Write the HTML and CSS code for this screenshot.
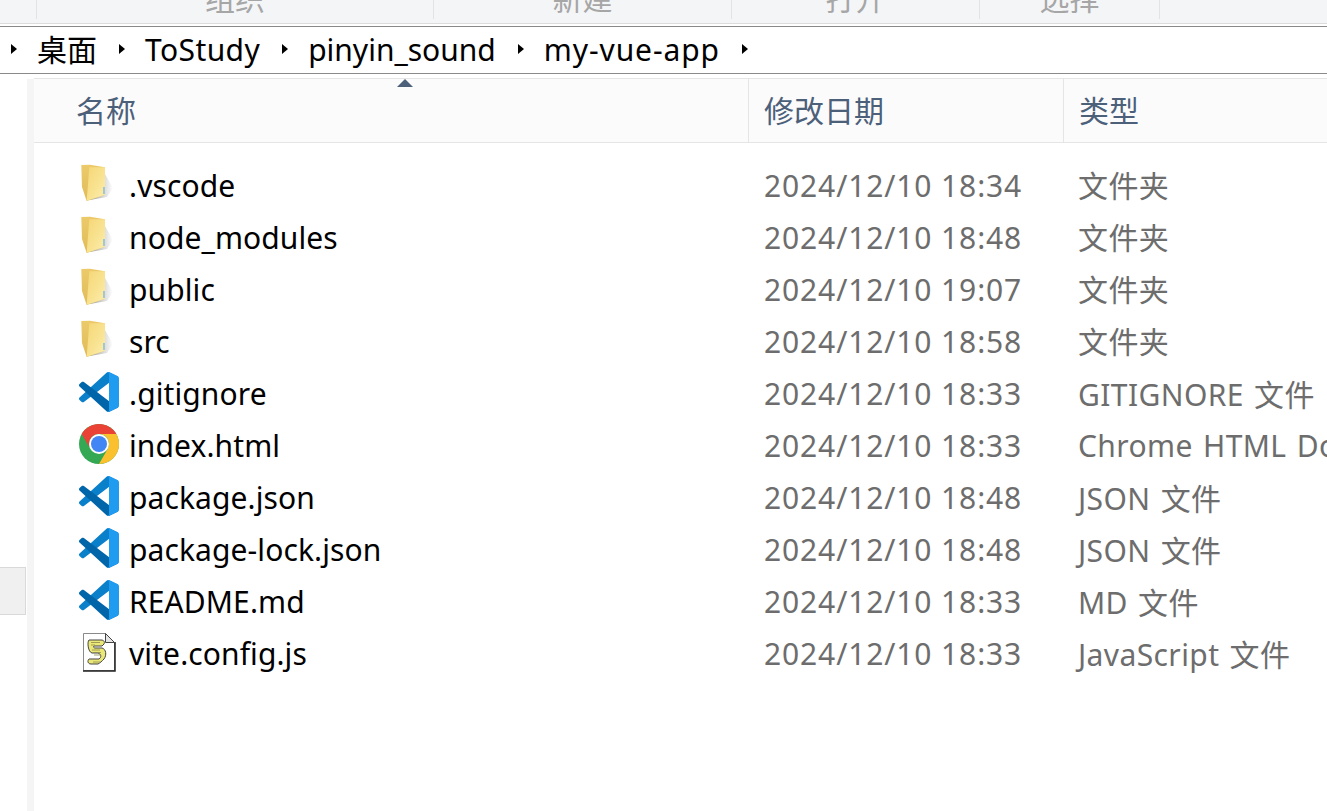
FILE: index.html
```html
<!DOCTYPE html>
<html lang="zh-CN">
<head>
  <meta charset="UTF-8">
  <title>my-vue-app</title>
  <link rel="stylesheet" href="styles.css">
</head>
<body>
<svg class="defs" width="0" height="0">
  <defs>
    <linearGradient id="fold-back" x1="0" y1="0" x2="0" y2="1">
      <stop offset="0" stop-color="#ecca6a"/>
      <stop offset="1" stop-color="#e0bc58"/>
    </linearGradient>
    <linearGradient id="fold-front" x1="0" y1="0" x2="1" y2="1">
      <stop offset="0" stop-color="#f5d676"/>
      <stop offset=".6" stop-color="#f9e494"/>
      <stop offset="1" stop-color="#fcefb4"/>
    </linearGradient>
    <linearGradient id="fold-shadow" x1="0" y1="0" x2="1" y2="0">
      <stop offset="0" stop-color="#909090"/>
      <stop offset="1" stop-color="#ffffff"/>
    </linearGradient>
    <symbol id="folder" viewBox="0 0 40 40">
      <path d="M26 10l8 14-6 9-17 3z" fill="url(#fold-shadow)" opacity=".85"/>
      <path d="M2.300 1l8.700-.3 15 2.600v27.400L7.700 37 3 23z" fill="url(#fold-back)"/>
      <path d="M10.300 3.300H26v27.400L7.700 36.700z" fill="url(#fold-front)"/>
      <path d="M25 23v7" stroke="#6cb0e4" stroke-width="1.200"/>
    </symbol>
    <symbol id="vscode" viewBox="0 0 100 100">
      <path d="M96.46 10.8L75.86.88C73.47-.27 70.62.21 68.75 2.08L1.3 63.58c-1.81 1.66-1.81 4.51 0 6.16l5.51 5.01c1.49 1.35 3.72 1.45 5.32.24L93.36 13.37C96.09 11.3 100 13.25 100 16.67v-.24c0-2.4-1.38-4.59-3.54-5.63z" fill="#0a7fca"/>
      <path d="M96.46 89.2L75.86 99.12c-2.39 1.15-5.24.67-7.11-1.2L1.3 36.42c-1.81-1.66-1.81-4.51 0-6.16l5.51-5.01c1.49-1.35 3.72-1.45 5.32-.24l81.23 61.62c2.73 2.07 6.64.12 6.64-3.3v.24c0 2.4-1.38 4.59-3.54 5.63z" fill="#0065a9"/>
      <path d="M75.86 99.13c-2.39 1.15-5.24.66-7.11-1.21 2.31 2.31 6.25.67 6.25-2.59V4.67c0-3.26-3.94-4.89-6.25-2.59C70.62.21 73.47-.27 75.86.87l20.6 9.91c2.16 1.04 3.54 3.23 3.54 5.63v67.18c0 2.4-1.38 4.59-3.54 5.63z" fill="#1f9cf0"/>
    </symbol>
    <symbol id="chrome" viewBox="0 0 40 40">
      <circle cx="20" cy="20" r="20" fill="#34a853"/>
      <path d="M20 10H37.32A20 20 0 0 0 2.68 10L11.34 25A10 10 0 0 1 20 10z" fill="#ea4335"/>
      <path d="M37.32 10H20A10 10 0 0 1 28.66 25L20 40A20 20 0 0 0 37.32 10z" fill="#fbc02d"/>
      <circle cx="20" cy="20" r="10" fill="#fff"/>
      <circle cx="20" cy="20" r="8" fill="#4285f4"/>
    </symbol>
    <symbol id="script" viewBox="0 0 40 40">
      <path d="M4.500 1.500h22l9 9v28h-31z" fill="#fff" stroke="#8a8a8a"/>
      <path d="M36 10v29H4" fill="none" stroke="#222" stroke-width="1.500"/>
      <path d="M26.500 1.500v9h9z" fill="#e4e4e4" stroke="#444"/>
      <path d="M10 8h12c3 0 4 2 3 4l-2 2h-8c-1 1 0 2 1 2h7c4 1 5 7 2 11-2 2-4 4-6 5H12c-3 0-4-3-2-5h10c3-2 2-5-1-6h-6C9 20 8 10 10 8z" fill="#ece878" stroke="#444" stroke-width="1"/>
      <path d="M12 10.500h9M12 13h4M13 18h8M14 20.500h8M15 23h7M14 30h7" stroke="#8a8a50" stroke-width=".8"/>
    </symbol>
  </defs>
</svg>

<div class="ribbon">
  <div class="ribbon-group g1">组织</div>
  <div class="ribbon-group g2">新建</div>
  <div class="ribbon-group g3">打开</div>
  <div class="ribbon-group g4">选择</div>
</div>

<nav class="crumbs">
  <i class="arrow"></i><span class="cjk">桌面</span>
  <i class="arrow"></i><span class="wide-a">ToStudy</span>
  <i class="arrow"></i><span>pinyin_sound</span>
  <i class="arrow"></i><span class="wide-b">my-vue-app</span>
  <i class="arrow"></i>
</nav>

<div class="explorer">
  <aside class="nav-pane"><div class="nav-selected"></div></aside>
  <div class="nav-gutter"></div>
  <main class="files">
    <div class="head">
      <div class="col-name">名称<i class="sort"></i></div>
      <div class="col-date">修改日期</div>
      <div class="col-type">类型</div>
    </div>
    <div class="rows">
      <div class="row"><div class="col-name"><svg class="icon"><use href="#folder"/></svg>.vscode</div><div class="col-date">2024/12/10 18:34</div><div class="col-type folder-type">文件夹</div></div>
      <div class="row"><div class="col-name"><svg class="icon"><use href="#folder"/></svg>node_modules</div><div class="col-date">2024/12/10 18:48</div><div class="col-type folder-type">文件夹</div></div>
      <div class="row"><div class="col-name"><svg class="icon"><use href="#folder"/></svg>public</div><div class="col-date">2024/12/10 19:07</div><div class="col-type folder-type">文件夹</div></div>
      <div class="row"><div class="col-name"><svg class="icon"><use href="#folder"/></svg>src</div><div class="col-date">2024/12/10 18:58</div><div class="col-type folder-type">文件夹</div></div>
      <div class="row"><div class="col-name"><svg class="icon"><use href="#vscode"/></svg>.gitignore</div><div class="col-date">2024/12/10 18:33</div><div class="col-type">GITIGNORE 文件</div></div>
      <div class="row"><div class="col-name"><svg class="icon"><use href="#chrome"/></svg>index.html</div><div class="col-date">2024/12/10 18:33</div><div class="col-type">Chrome HTML Document</div></div>
      <div class="row"><div class="col-name"><svg class="icon"><use href="#vscode"/></svg>package.json</div><div class="col-date">2024/12/10 18:48</div><div class="col-type">JSON 文件</div></div>
      <div class="row"><div class="col-name"><svg class="icon"><use href="#vscode"/></svg>package-lock.json</div><div class="col-date">2024/12/10 18:48</div><div class="col-type">JSON 文件</div></div>
      <div class="row"><div class="col-name"><svg class="icon"><use href="#vscode"/></svg>README.md</div><div class="col-date">2024/12/10 18:33</div><div class="col-type">MD 文件</div></div>
      <div class="row"><div class="col-name"><svg class="icon"><use href="#script"/></svg>vite.config.js</div><div class="col-date">2024/12/10 18:33</div><div class="col-type">JavaScript 文件</div></div>
    </div>
  </main>
</div>
</body>
</html>
```

FILE: styles.css
```css
html, body {
  margin: 0;
  height: 100%;
  overflow: hidden;
}
body {
  width: 1327px;
  height: 811px;
  background: #fff;
  font-family: "Noto Sans", "Noto Sans CJK SC", sans-serif;
  font-size: 30px;
  color: #000;
}
.defs {
  display: block;
  height: 0;
}

/* ribbon, only the cut off bottom of it shows */
.ribbon {
  display: flex;
  height: 23px;
  padding-left: 36px;
  background: #f4f5f7;
  border-bottom: 1px solid #dcdcdc;
  overflow: hidden;
}
.ribbon-group {
  height: 19px;
  padding-bottom: 5px;
  display: flex;
  align-items: flex-end;
  justify-content: center;
  border-left: 1px solid #e2e3e5;
  font-size: 30px;
  line-height: 30px;
  color: #a6a6a6;
  box-sizing: border-box;
}
.g1 { width: 397px; }
.g2 { width: 298px; }
.g3 { width: 248px; }
.g4 { width: 181px; border-right: 1px solid #e2e3e5; }

.crumbs {
  display: flex;
  align-items: center;
  margin-top: 2px;
  padding-left: 11px;
  padding-bottom: 2px;
  height: 44px;
  border-top: 1px solid #8a8a8a;
  border-bottom: 1px solid #8a8a8a;
}
.crumbs .arrow {
  width: 0;
  height: 0;
  border-left: 6px solid #000;
  border-top: 5px solid transparent;
  border-bottom: 5px solid transparent;
  margin-right: 20px;
}
.crumbs span {
  margin-right: 22px;
  white-space: nowrap;
}
.crumbs .cjk { padding-bottom: 2px; }
.wide-a { letter-spacing: .4px; }
.wide-b { letter-spacing: .9px; }

.explorer {
  display: flex;
  height: 733px;
  margin-top: 5px;
}
.nav-pane {
  width: 27px;
  padding-top: 488px;
  box-sizing: border-box;
}
.nav-selected {
  height: 48px;
  width: 26px;
  background: #f0f0f0;
  border: solid #d9d9d9;
  border-width: 1px 1px 1px 0;
  box-sizing: border-box;
}
.nav-gutter {
  width: 7px;
  background: #f5f5f5;
}
.files {
  flex: 1;
  min-width: 0;
}
.head {
  display: flex;
  height: 63px;
  background: #fbfbfc;
  border-top: 1px solid #e5e5e5;
  border-bottom: 1px solid #e5e5e5;
  margin-top: -1px;
  color: #4c607a;
}
.head .col-name {
  position: relative;
  padding-left: 42px;
  padding-bottom: 3px;
  overflow: visible;
}
.head .col-date, .head .col-type {
  border-left: 1px solid #e5e5e5;
  padding-bottom: 3px;
}
.head .col-date { padding-left: 15px; }
.sort {
  position: absolute;
  top: 0;
  left: 363px;
  width: 0;
  height: 0;
  border-left: 8px solid transparent;
  border-right: 8px solid transparent;
  border-bottom: 8px solid #4c607a;
}
.rows {
  padding-top: 16px;
}
.row {
  display: flex;
  height: 52px;
  white-space: nowrap;
}
.col-name, .col-date, .col-type {
  display: flex;
  align-items: center;
  box-sizing: border-box;
  overflow: hidden;
  white-space: nowrap;
}
.col-name {
  width: 714px;
}
.col-date {
  width: 315px;
  padding-left: 16px;
}
.col-type {
  width: 264px;
  padding-left: 15px;
}
.row .col-date {
  color: #6d6d6d;
  letter-spacing: .88px;
}
.row .col-type {
  color: #6d6d6d;
  word-spacing: 2px;
  letter-spacing: .4px;
}
.row .folder-type {
  padding-bottom: 2px;
}
.row .col-name {
  padding-left: 45px;
  letter-spacing: .1px;
}
.icon {
  width: 40px;
  height: 40px;
  margin-right: 10px;
  margin-bottom: 2px;
  flex: none;
}
```
